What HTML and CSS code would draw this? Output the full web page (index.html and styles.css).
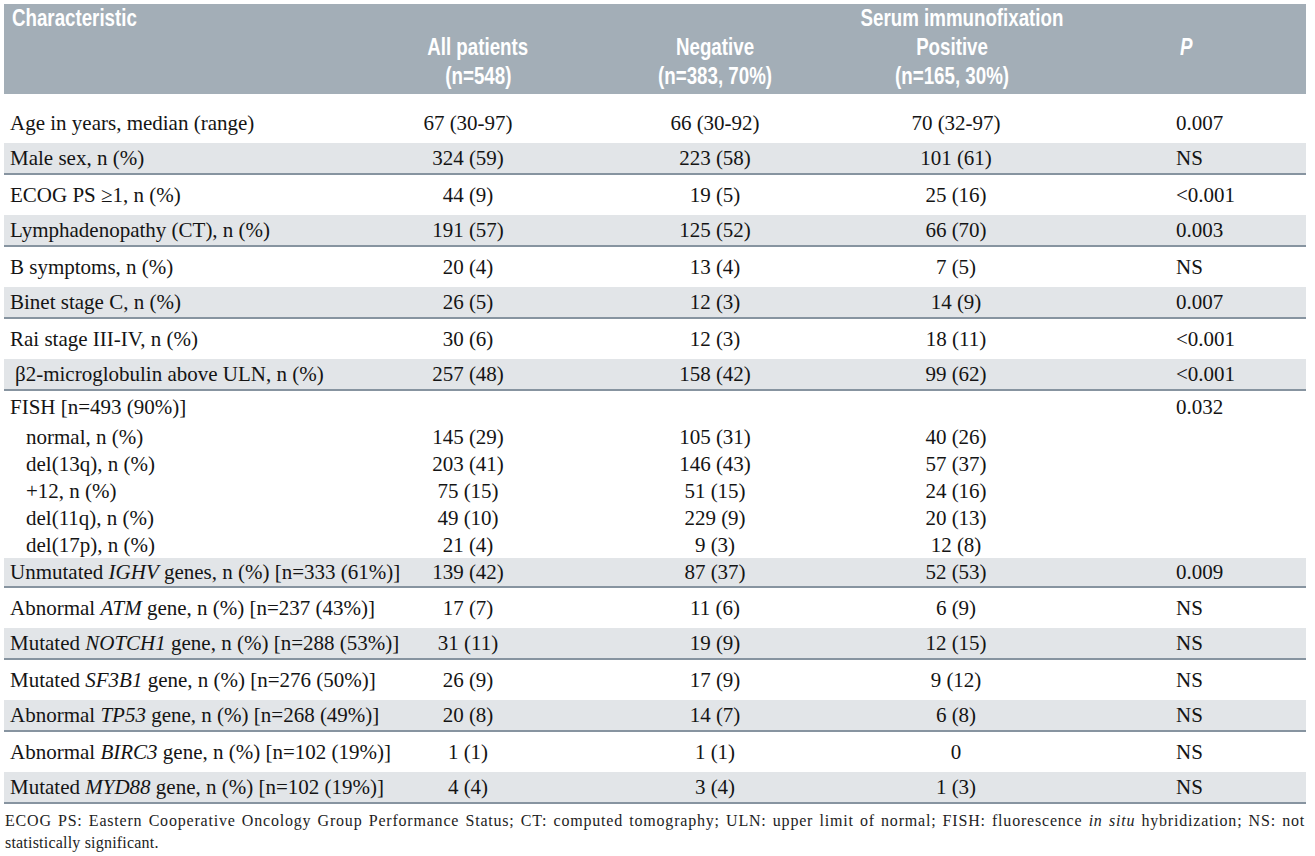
FILE: index.html
```html
<!DOCTYPE html>
<html>
<head>
<meta charset="utf-8">
<title>Table</title>
<link rel="stylesheet" href="styles.css">
</head>
<body>
<div class="page">
<table class="tbl">
<colgroup><col class="c1"><col class="c2"><col class="c3"><col class="c4"><col class="c5"></colgroup>
<thead>
<tr class="h1"><th class="lab"><span class="hx left">Characteristic</span></th><th></th><th></th><th class="serum"><span class="hx">Serum immunofixation</span></th><th></th></tr>
<tr class="h2"><th></th><th class="all"><span class="hx">All patients</span></th><th><span class="hx">Negative</span></th><th class="pos"><span class="hx">Positive</span></th><th class="ph"><span class="hx left"><i>P</i></span></th></tr>
<tr class="h3"><th></th><th class="all"><span class="hx">(n=548)</span></th><th><span class="hx">(n=383, 70%)</span></th><th class="pos"><span class="hx">(n=165, 30%)</span></th><th></th></tr>
</thead>
<tbody>
<tr class="spacer"><td colspan="5"></td></tr>
<tr class="w age"><td class="lab">Age in years, median (range)</td><td>67 (30-97)</td><td>66 (30-92)</td><td>70 (32-97)</td><td class="pv">0.007</td></tr>
<tr class="g"><td class="lab">Male sex, n (%)</td><td>324 (59)</td><td>223 (58)</td><td>101 (61)</td><td class="pv">NS</td></tr>
<tr class="w"><td class="lab">ECOG PS ≥1, n (%)</td><td>44 (9)</td><td>19 (5)</td><td>25 (16)</td><td class="pv">&lt;0.001</td></tr>
<tr class="g"><td class="lab">Lymphadenopathy (CT), n (%)</td><td>191 (57)</td><td>125 (52)</td><td>66 (70)</td><td class="pv">0.003</td></tr>
<tr class="w"><td class="lab">B symptoms, n (%)</td><td>20 (4)</td><td>13 (4)</td><td>7 (5)</td><td class="pv">NS</td></tr>
<tr class="g"><td class="lab">Binet stage C, n (%)</td><td>26 (5)</td><td>12 (3)</td><td>14 (9)</td><td class="pv">0.007</td></tr>
<tr class="w"><td class="lab">Rai stage III-IV, n (%)</td><td>30 (6)</td><td>12 (3)</td><td>18 (11)</td><td class="pv">&lt;0.001</td></tr>
<tr class="g"><td class="lab beta">β2-microglobulin above ULN, n (%)</td><td>257 (48)</td><td>158 (42)</td><td>99 (62)</td><td class="pv">&lt;0.001</td></tr>
<tr class="f fhead"><td class="lab">FISH [n=493 (90%)]</td><td></td><td></td><td></td><td class="pv">0.032</td></tr>
<tr class="f"><td class="lab ind">normal, n (%)</td><td>145 (29)</td><td>105 (31)</td><td>40 (26)</td><td class="pv"></td></tr>
<tr class="f"><td class="lab ind">del(13q), n (%)</td><td>203 (41)</td><td>146 (43)</td><td>57 (37)</td><td class="pv"></td></tr>
<tr class="f"><td class="lab ind">+12, n (%)</td><td>75 (15)</td><td>51 (15)</td><td>24 (16)</td><td class="pv"></td></tr>
<tr class="f"><td class="lab ind">del(11q), n (%)</td><td>49 (10)</td><td>229 (9)</td><td>20 (13)</td><td class="pv"></td></tr>
<tr class="f"><td class="lab ind">del(17p), n (%)</td><td>21 (4)</td><td>9 (3)</td><td>12 (8)</td><td class="pv"></td></tr>
<tr class="g short"><td class="lab">Unmutated <i>IGHV</i> genes, n (%) [n=333 (61%)]</td><td>139 (42)</td><td>87 (37)</td><td>52 (53)</td><td class="pv">0.009</td></tr>
<tr class="w"><td class="lab">Abnormal <i>ATM</i> gene, n (%) [n=237 (43%)]</td><td>17 (7)</td><td>11 (6)</td><td>6 (9)</td><td class="pv">NS</td></tr>
<tr class="g"><td class="lab">Mutated <i>NOTCH1</i> gene, n (%) [n=288 (53%)]</td><td>31 (11)</td><td>19 (9)</td><td>12 (15)</td><td class="pv">NS</td></tr>
<tr class="w"><td class="lab">Mutated <i>SF3B1</i> gene, n (%) [n=276 (50%)]</td><td>26 (9)</td><td>17 (9)</td><td>9 (12)</td><td class="pv">NS</td></tr>
<tr class="g"><td class="lab">Abnormal <i>TP53</i> gene, n (%) [n=268 (49%)]</td><td>20 (8)</td><td>14 (7)</td><td>6 (8)</td><td class="pv">NS</td></tr>
<tr class="w"><td class="lab">Abnormal <i>BIRC3</i> gene, n (%) [n=102 (19%)]</td><td>1 (1)</td><td>1 (1)</td><td>0</td><td class="pv">NS</td></tr>
<tr class="g"><td class="lab">Mutated <i>MYD88</i> gene, n (%) [n=102 (19%)]</td><td>4 (4)</td><td>3 (4)</td><td>1 (3)</td><td class="pv">NS</td></tr>
</tbody>
</table>
<div class="note">
<div class="l1">ECOG PS: Eastern Cooperative Oncology Group Performance Status; CT: computed tomography; ULN: upper limit of normal; FISH: fluorescence <i>in situ</i> hybridization; NS: not</div>
<div class="l2">statistically significant.</div>
</div>
</div>
</body>
</html>
```

FILE: styles.css
```css
html, body {
  margin: 0;
  padding: 0;
  background: #ffffff;
}

.page {
  padding: 4px 0 0 4px;
}

.tbl {
  width: 1302px;
  border-collapse: collapse;
  table-layout: fixed;
  font-family: "Liberation Serif", "Times New Roman", serif;
  font-size: 21px;
  color: #141414;
}

col.c1 { width: 334px; }
col.c2 { width: 260px; }
col.c3 { width: 234px; }
col.c4 { width: 248px; }
col.c5 { width: 226px; }

thead th {
  background: #a3aeb7;
  color: #ffffff;
  font-family: "Liberation Sans", Arial, sans-serif;
  font-weight: 700;
  font-size: 24px;
  text-align: center;
  padding: 0;
  white-space: nowrap;
  vertical-align: middle;
}

.hx {
  display: inline-block;
  transform: scaleX(0.78);
  transform-origin: center;
}

.hx.left {
  transform-origin: left center;
}

thead th.lab {
  text-align: left;
  padding-left: 8px;
}

thead th.all { padding-left: 20px; }
thead th.pos { padding-right: 8px; }
thead th.serum { padding-right: 10px; }
thead th.ph { text-align: left; padding-left: 100px; }

.h1 th { height: 28px; line-height: 28px; }
.h2 th { height: 29px; line-height: 29px; }
.h3 th { height: 29px; line-height: 29px; padding-bottom: 4px; }

tbody td {
  padding: 0;
  text-align: center;
  white-space: nowrap;
  vertical-align: middle;
  line-height: 24px;
  overflow: visible;
}

tbody td.lab {
  text-align: left;
  padding-left: 6px;
}

tbody td.ind { padding-left: 22px; }
tbody td.beta { padding-left: 11px; }

tbody td.pv {
  text-align: left;
  padding-left: 96px;
}

tr.spacer td { height: 8px; padding: 0; }

tr.w td { height: 40px; }
tr.age td { height: 41px; }

tr.g td {
  height: 30px;
  background: #e2e5e8;
  border-bottom: 2px solid #8794a0;
}

tr.g.short td { height: 28px; }

tr.f td { height: 27px; }
tr.fhead td { height: 32px; }

.note {
  width: 1300px;
  margin-left: 1px;
  margin-top: 6px;
  font-family: "Liberation Serif", "Times New Roman", serif;
  font-size: 16px;
  line-height: 22px;
  color: #222222;
  letter-spacing: 0.2px;
}

.note .l1 {
  text-align: justify;
  text-align-last: justify;
  letter-spacing: 0.8px;
}
```
